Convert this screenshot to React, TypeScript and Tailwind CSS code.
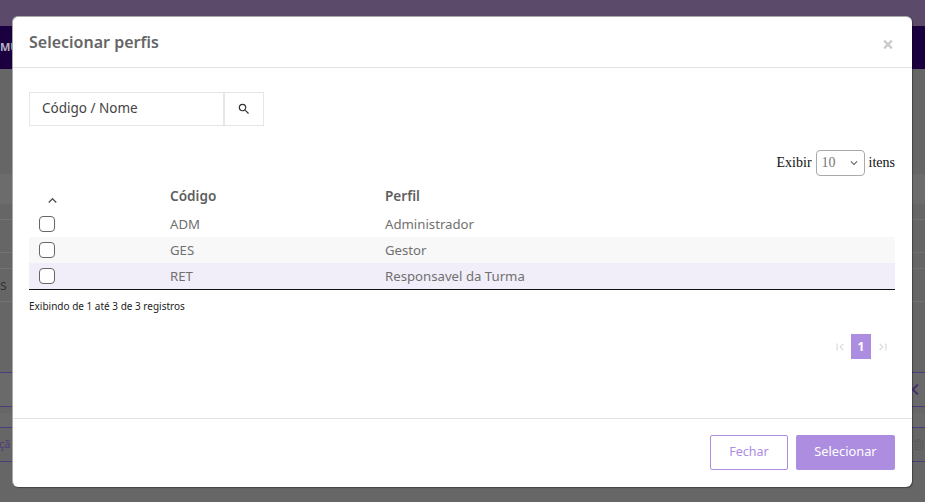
import React from 'react';
import { FaTimes, FaChevronLeft, FaRegTrashAlt } from 'react-icons/fa';
import { MdSearch, MdKeyboardArrowUp, MdKeyboardArrowDown, MdFirstPage, MdLastPage } from 'react-icons/md';

const rows = [
  { code: 'ADM', name: 'Administrador', bg: 'bg-white' },
  { code: 'GES', name: 'Gestor', bg: 'bg-[#f8f8f8]' },
  { code: 'RET', name: 'Responsavel da Turma', bg: 'bg-[#f1eef9]' },
];

const App: React.FC = () => {
  return (
    <div className="relative h-[502px] w-[925px] overflow-hidden bg-[#666666] font-['Noto_Sans',sans-serif]">
      {/* page behind the backdrop */}
      <div className="h-[26px] bg-[#5b4a69]"></div>
      <div className="flex h-[43px] items-center bg-[#1b0040] text-[11px] font-bold text-[#b5b0bd]">MU</div>
      <div className="mt-[105px] h-[30px] bg-[#6c6c6c]"></div>
      <div className="h-[16px] border-b border-[#727272]"></div>
      <div className="h-[33px] border-b border-[#727272]"></div>
      <div className="h-[16px] border-b border-[#727272]"></div>
      <div className="flex h-[33px] items-center justify-between border-b border-[#727272] text-sm text-[#333333]">s</div>
      <div className="h-[71px] border-b border-[#4f3a7c]"></div>
      <div className="flex h-[34px] items-center justify-end border-b border-[#4f3a7c] bg-[#6a6a6a] pr-[6px] text-[#45306f]">
        <FaChevronLeft className="h-[13px] w-[8px]" />
      </div>
      <div className="mt-[6px] h-[15px] border-b border-[#4f3a7c] bg-[#6a6a6a]"></div>
      <div className="flex h-[34px] items-center justify-between border-b border-[#4f3a7c] text-[11px] text-[#4f3a7c]">
        <span className="-ml-[1px]">çã</span>
        <FaRegTrashAlt className="mr-[1px] h-[11px] w-[10px] text-[#5a5a5a]" />
      </div>

      {/* modal */}
      <div className="absolute left-[12px] top-[16px] flex h-[471px] w-[900px] flex-col rounded-[6px] border-l border-t border-[#a8a8a8] bg-white shadow-[1px_1px_1px_rgba(0,0,0,0.35)]">
        <div className="flex h-[51px] items-center justify-between border-b border-[#e3e3e3] pl-[16px] pr-[18px]">
          <h1 className="text-base font-semibold text-[#666666]">Selecionar perfis</h1>
          <FaTimes className="mt-1 h-[13px] w-[12px] text-[#cccccc]" />
        </div>

        <div className="flex-1 pl-[16px] pr-[17px] pt-[24px]">
          <div className="flex h-[34px] w-[235px]">
            <div className="flex w-[195px] items-center border border-[#e6e6e6] pb-[2px] pl-[12px] text-[13.5px] text-[#444444]">Código / Nome</div>
            <div className="flex w-[40px] items-center justify-center border border-[#e6e6e6]">
              <MdSearch className="h-[14px] w-[14px] text-[#333333]" />
            </div>
          </div>

          <div className="mt-[24px] flex items-center justify-end gap-[4px] font-['Liberation_Serif',serif] text-sm text-[#111111]">
            <span>Exibir</span>
            <div className="flex h-[26px] w-[49px] items-center justify-between rounded-[4px] border border-[#aaaaaa] pl-[5px] pr-[3px] text-[#777777]">
              <span>10</span>
              <MdKeyboardArrowDown className="h-[14px] w-[14px] text-[#666666]" />
            </div>
            <span>itens</span>
          </div>

          <div className="mt-[9px] flex h-[26px] items-center text-[13.6px] font-semibold text-[#5f5f5f]">
            <div className="w-[141px] pl-[15px] pt-[5px]">
              <MdKeyboardArrowUp className="h-[17px] w-[17px] text-[#555555]" />
            </div>
            <div className="w-[215px] pb-[4px]">Código</div>
            <div className="pb-[4px]">Perfil</div>
          </div>

          <div className="border-b border-[#111111]">
            {rows.map((row) => (
              <div key={row.code} className={`flex h-[26px] items-center text-[13.2px] text-[#707070] ${row.bg}`}>
                <div className="w-[141px] pl-[10px]">
                  <div className="h-4 w-4 rounded-[4px] border border-[#666666] bg-white"></div>
                </div>
                <div className="w-[215px] pt-[2px]">{row.code}</div>
                <div className="pt-[2px]">{row.name}</div>
              </div>
            ))}
          </div>

          <p className="mt-[9px] text-[10px] text-[#222222]">Exibindo de 1 até 3 de 3 registros</p>

          <div className="mt-[20px] flex items-center justify-end text-[#d8d8d8]">
            <span className="flex w-[22px] items-center justify-center">
              <MdFirstPage className="h-[14px] w-[14px]" />
            </span>
            <span className="flex h-[25px] w-[20px] items-center justify-center bg-[#ac8ddf] text-xs font-bold text-white">1</span>
            <span className="flex w-[24px] items-center justify-center">
              <MdLastPage className="h-[14px] w-[14px]" />
            </span>
          </div>
        </div>

        <div className="flex h-[69px] items-center justify-end gap-[8px] border-t border-[#e3e3e3] pb-[2px] pr-[17px]">
          <button className="h-[35px] w-[78px] rounded-[2px] border border-[#ac8ddf] bg-white text-[12.5px] text-[#ac8ddf]">Fechar</button>
          <button className="h-[35px] w-[99px] rounded-[2px] bg-[#ac8ddf] text-[12.8px] text-white">Selecionar</button>
        </div>
      </div>
    </div>
  );
};

export default App;
